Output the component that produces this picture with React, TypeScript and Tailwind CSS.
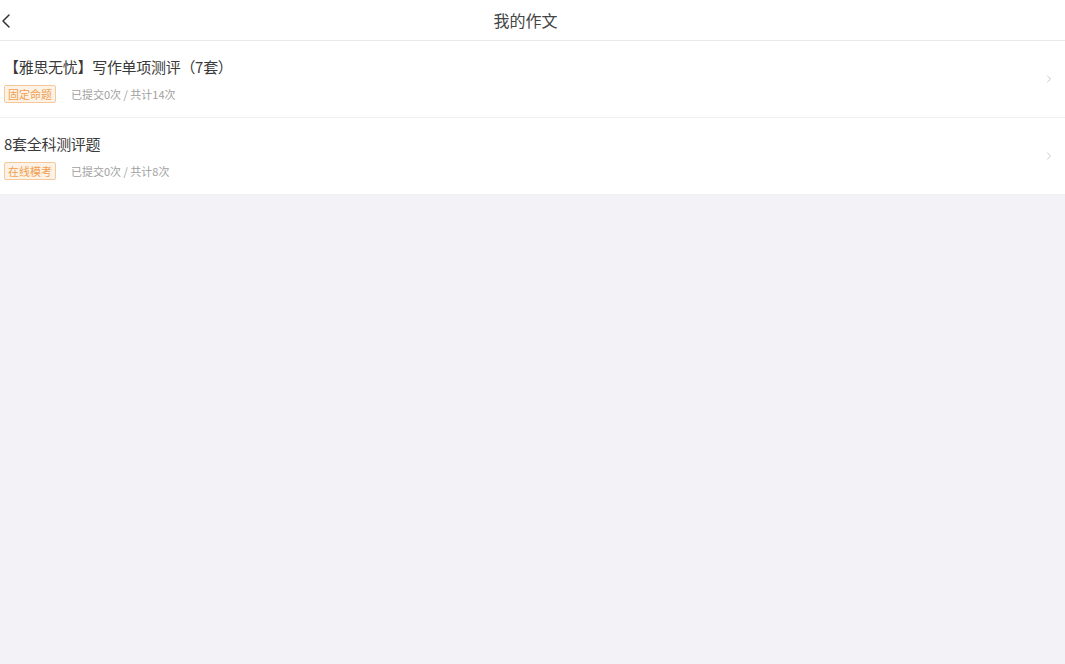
import { ChevronLeft, ChevronRight } from "lucide-react";

const items = [
  { title: "【雅思无忧】写作单项测评（7套）", tag: "固定命题", info: "已提交0次 / 共计14次" },
  { title: "8套全科测评题", tag: "在线模考", info: "已提交0次 / 共计8次" },
];

export default function App() {
  return (
    <div
      className="w-[1065px] h-[664px] bg-[#f3f3f7] flex flex-col overflow-hidden"
      style={{ fontFamily: '"Noto Sans CJK SC", "Noto Sans", sans-serif' }}
    >
      <header className="h-[41px] bg-white border-b border-[#e8e8e8] flex items-center relative shrink-0">
        <ChevronLeft className="absolute left-[-6px] top-[9px] w-[24px] h-[24px] text-[#333]" strokeWidth={1.5} />
        <div className="flex-1 text-center text-[16px] text-[#444] leading-none pr-[14px]">我的作文</div>
      </header>
      {items.map((it) => (
        <div key={it.title} className="h-[77px] bg-white border-b border-[#f0f0f0] flex items-center pl-[4px] pr-[10px] shrink-0">
          <div className="flex-1 flex flex-col gap-[9px] pt-[3px]">
            <div className="text-[15px] tracking-[-0.3px] text-[#3a3a3a] leading-[18px]">{it.title}</div>
            <div className="flex items-center gap-[15px]">
              <span className="text-[11px] leading-[14px] px-[3px] py-[1px] text-[#f0a050] bg-[#fdf2e6] border border-[#f5c99c] rounded-[2px]">
                {it.tag}
              </span>
              <span className="text-[11px] text-[#a0a0a0] leading-[14px]">{it.info}</span>
            </div>
          </div>
          <ChevronRight className="w-[12px] h-[12px] text-[#c8c8c8]" strokeWidth={2} />
        </div>
      ))}
    </div>
  );
}
